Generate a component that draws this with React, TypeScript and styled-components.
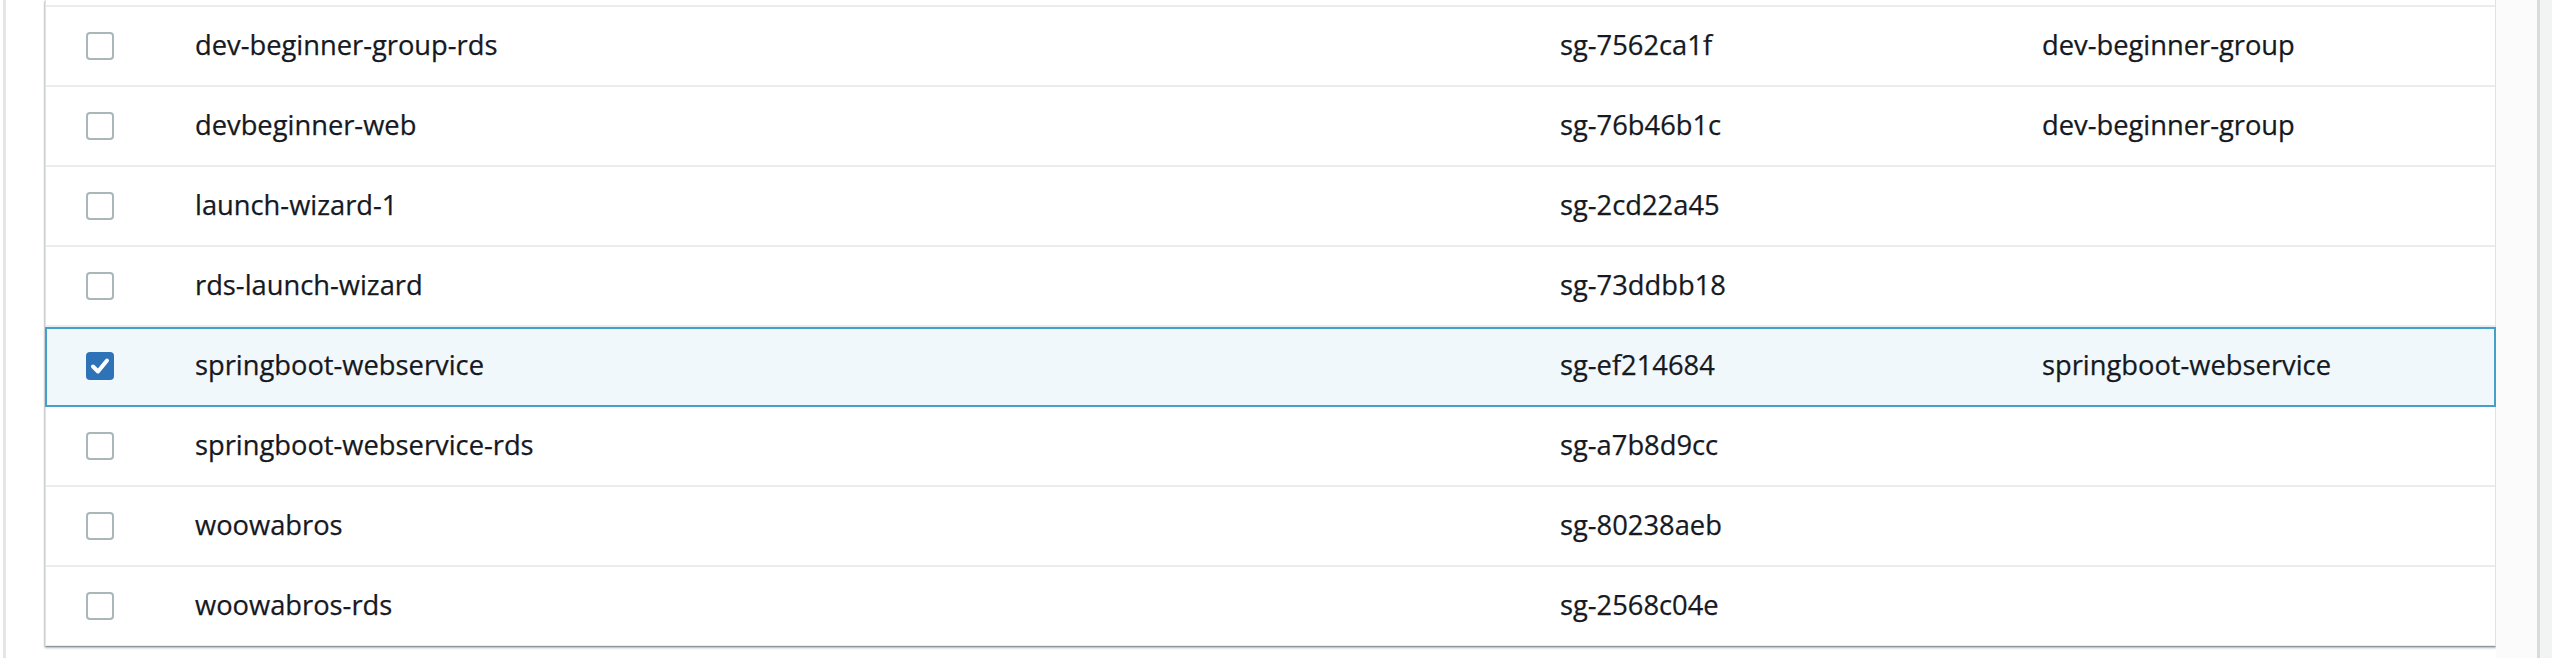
import React from "react";
import styled, { createGlobalStyle } from "styled-components";

const GlobalStyle = createGlobalStyle`
  html, body {
    margin: 0;
    padding: 0;
    background: #ffffff;
  }
  * { box-sizing: border-box; }
`;

const Page = styled.div`
  display: flex;
  width: 2552px;
  height: 658px;
  overflow: hidden;
  background: #ffffff;
  font-family: "Open Sans", "Noto Sans", sans-serif;
`;

const LeftGutter = styled.div`
  width: 42px;
  flex: none;
  margin-left: 3px;
  border-left: 3px solid #e3e6e6;
  background: #ffffff;
`;

const Panel = styled.div`
  flex: 1;
  align-self: flex-start;
  background: #ffffff;
  border-left: 1px solid #dfe3e3;
  border-right: 1px solid #dfe3e3;
  border-bottom: 1px solid #e9eded;
  box-shadow: 0 2px 2px 0 rgba(0, 28, 36, 0.3), 1px 1px 1px 0 rgba(0, 28, 36, 0.12),
    -1px 1px 1px 0 rgba(0, 28, 36, 0.12);
`;

const Stub = styled.div`
  height: 5px;
`;

const Row = styled.div<{ $selected?: boolean }>`
  display: grid;
  grid-template-columns: 149px 1365px 482px 1fr;
  align-items: center;
  height: 80px;
  border-top: 2px solid #eaeded;
  position: relative;
  color: #16191f;
  font-size: 27.3px;
  line-height: 1;
  background: ${(p) => (p.$selected ? "#f1f8fc" : "#ffffff")};

  ${(p) =>
    p.$selected &&
    `
    &::after {
      content: "";
      position: absolute;
      left: -1px;
      right: -1px;
      top: 0;
      bottom: -2px;
      border: 2px solid #449fca;
      z-index: 1;
      pointer-events: none;
    }
  `}
`;

const CheckCell = styled.div`
  display: flex;
  align-items: center;
  padding-left: 40px;
`;

const Cell = styled.div`
  white-space: nowrap;
  padding-bottom: 2px;
  -webkit-text-stroke: 0.25px #16191f;
`;

const BoxEmpty = styled.span`
  display: block;
  width: 28px;
  height: 28px;
  border: 2px solid #aab7b8;
  border-radius: 4px;
  background: #ffffff;
`;

const RightGutter = styled.div`
  width: 41px;
  flex: none;
  background: #fbfbfb;
`;

const ScrollStrip = styled.div`
  width: 15px;
  flex: none;
  border-left: 3px solid #d8dbdb;
  background: #f2f3f3;
`;

const Checked = () => (
  <svg width="28" height="28" viewBox="0 0 28 28" style={{ display: "block" }}>
    <rect x="0" y="0" width="28" height="28" rx="4" fill="#2e73b8" />
    <path
      d="M7 14.5 L12 19.5 L21 8.5"
      fill="none"
      stroke="#ffffff"
      strokeWidth="4"
      strokeLinecap="round"
      strokeLinejoin="round"
    />
  </svg>
);

const rows = [
  { name: "dev-beginner-group-rds", id: "sg-7562ca1f", vpc: "dev-beginner-group" },
  { name: "devbeginner-web", id: "sg-76b46b1c", vpc: "dev-beginner-group" },
  { name: "launch-wizard-1", id: "sg-2cd22a45", vpc: "" },
  { name: "rds-launch-wizard", id: "sg-73ddbb18", vpc: "" },
  { name: "springboot-webservice", id: "sg-ef214684", vpc: "springboot-webservice", selected: true },
  { name: "springboot-webservice-rds", id: "sg-a7b8d9cc", vpc: "" },
  { name: "woowabros", id: "sg-80238aeb", vpc: "" },
  { name: "woowabros-rds", id: "sg-2568c04e", vpc: "" },
];

export default function App() {
  return (
    <>
      <GlobalStyle />
      <Page>
        <LeftGutter />
        <Panel>
          <Stub />
          {rows.map((r) => (
            <Row key={r.id} $selected={r.selected}>
              <CheckCell>{r.selected ? <Checked /> : <BoxEmpty />}</CheckCell>
              <Cell>{r.name}</Cell>
              <Cell>{r.id}</Cell>
              <Cell>{r.vpc}</Cell>
            </Row>
          ))}
        </Panel>
        <RightGutter />
        <ScrollStrip />
      </Page>
    </>
  );
}
